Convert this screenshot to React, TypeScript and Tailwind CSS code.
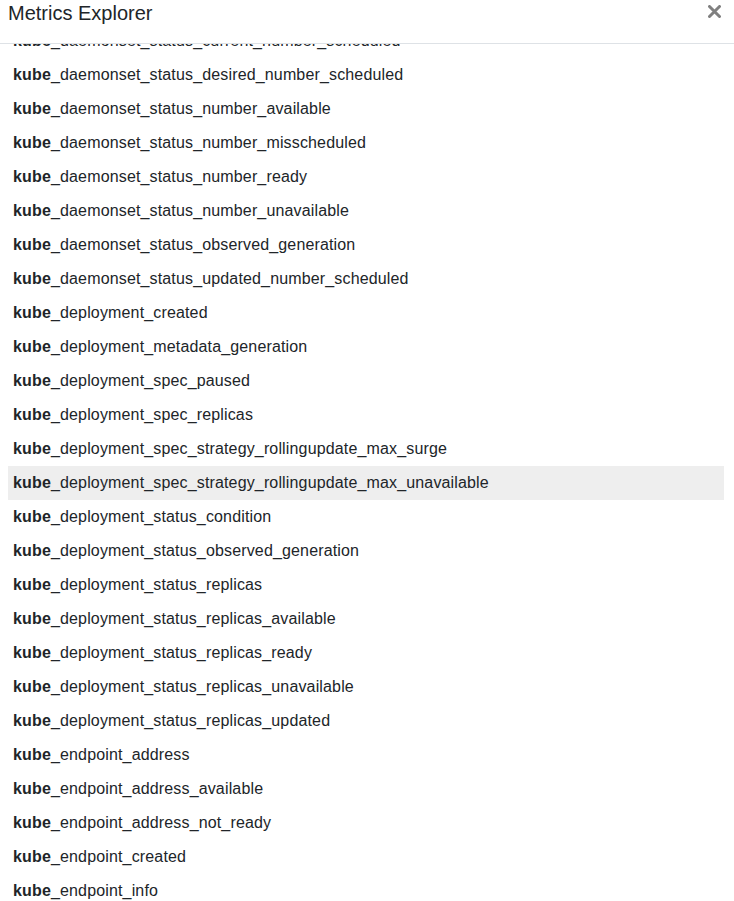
import React from "react";

const metrics: string[] = [
  "daemonset_status_current_number_scheduled",
  "daemonset_status_desired_number_scheduled",
  "daemonset_status_number_available",
  "daemonset_status_number_misscheduled",
  "daemonset_status_number_ready",
  "daemonset_status_number_unavailable",
  "daemonset_status_observed_generation",
  "daemonset_status_updated_number_scheduled",
  "deployment_created",
  "deployment_metadata_generation",
  "deployment_spec_paused",
  "deployment_spec_replicas",
  "deployment_spec_strategy_rollingupdate_max_surge",
  "deployment_spec_strategy_rollingupdate_max_unavailable",
  "deployment_status_condition",
  "deployment_status_observed_generation",
  "deployment_status_replicas",
  "deployment_status_replicas_available",
  "deployment_status_replicas_ready",
  "deployment_status_replicas_unavailable",
  "deployment_status_replicas_updated",
  "endpoint_address",
  "endpoint_address_available",
  "endpoint_address_not_ready",
  "endpoint_created",
  "endpoint_info",
  "endpoint_labels",
];

const App: React.FC = () => {
  const active = "deployment_spec_strategy_rollingupdate_max_unavailable";

  return (
    <div className="w-[734px] h-[901px] bg-white text-[#212529] font-['Liberation_Sans',Arial,sans-serif] flex flex-col overflow-hidden">
      {/* Header */}
      <div className="h-[44px] shrink-0 flex items-start justify-between pl-2 pr-3 border-b border-[#dee2e6] bg-white relative z-10">
        <h5 className="text-[20px] leading-[24px] pt-[1px] font-normal">Metrics Explorer</h5>
        <button aria-label="Close" className="mt-[5px] mr-[1px] text-[#808080]">
          <svg width="13" height="13" viewBox="0 0 13 13">
            <path d="M1.5 1.5 L11.5 11.5 M11.5 1.5 L1.5 11.5" stroke="currentColor" strokeWidth="3" strokeLinecap="round" />
          </svg>
        </button>
      </div>

      {/* Scrolled list */}
      <div className="flex-1 overflow-hidden pl-2 pr-[10px]">
        <ul className="-mt-[20px]">
          {metrics.map((m) => (
            <li
              key={m}
              className={`h-[34px] flex items-center pl-[5px] text-[16px] tracking-[0.15px] ${
                m === active ? "bg-[#eeeeee]" : ""
              }`}
            >
              <span className="font-bold">kube</span>
              <span>_{m}</span>
            </li>
          ))}
        </ul>
      </div>
    </div>
  );
};

export default App;
